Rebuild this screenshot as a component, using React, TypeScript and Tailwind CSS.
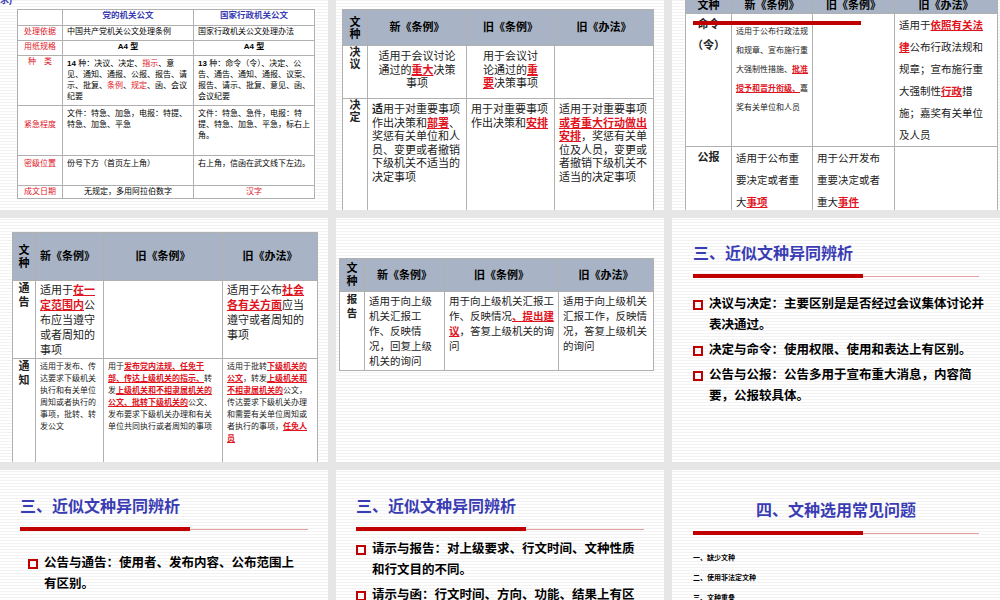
import React from "react";

const slideBg =
	"relative overflow-hidden bg-[repeating-linear-gradient(0deg,#ffffff_0px,#ffffff_2px,#f2f2f2_2px,#f2f2f2_3px)]";

function R({ children }: { children: React.ReactNode }) {
	return <span className="text-[#e0141e] font-bold underline">{children}</span>;
}

function Title({ text, center }: { text: string; center?: boolean }) {
	return (
		<div>
			<div className={`text-[16px] font-bold text-[#3a3cb4] ${center ? "text-center" : ""}`}>{text}</div>
			<div className="mt-2 flex items-center">
				<div className="h-[4px] w-[170px] bg-[#c00000]" />
				<div className="h-px flex-1 bg-[#e6a0a0]" />
			</div>
		</div>
	);
}

function Bullet({ children }: { children: React.ReactNode }) {
	return (
		<div className="flex gap-1.5 text-[12.5px] font-bold leading-[21px] text-black">
			<span className="mt-[6px] h-[10px] w-[10px] shrink-0 border-2 border-[#c00000]" />
			<span>{children}</span>
		</div>
	);
}

const th = "border border-[#b0b0b0] bg-[#a8b4c5] font-bold text-black";
const td = "border border-[#b0b0b0] align-top";

export default function App() {
	return (
		<div
			className="grid h-[600px] w-[1000px] grid-cols-3 grid-rows-[210px_244px_1fr] gap-2 overflow-hidden bg-[#e6e6e6]"
			style={{ fontFamily: '"Liberation Sans", "Noto Sans CJK SC", sans-serif' }}
		>
			{/* slide 1 */}
			<div className={`${slideBg} px-[17px] pt-[9px]`}>
				<div className="absolute left-0 top-[-6px] text-[9px] font-bold text-[#3a3cb4]">求)</div>
				<table className="w-[298px] border-collapse border border-[#888] bg-white text-[8px] leading-[11px]">
					<colgroup>
						<col className="w-[45px]" />
						<col className="w-[131px]" />
						<col />
					</colgroup>
					<tbody>
						<tr className="h-[16px] text-center text-[#3a3cb4] font-bold text-[8.5px]">
							<td className={td} />
							<td className={`${td} align-middle`}>党的机关公文</td>
							<td className={`${td} align-middle`}>国家行政机关公文</td>
						</tr>
						<tr className="h-[15px]">
							<td className={`${td} text-[#e0141e] text-center align-middle`}>处理依据</td>
							<td className={`${td} px-1 align-middle`}>中国共产党机关公文处理条例</td>
							<td className={`${td} px-1 align-middle`}>国家行政机关公文处理办法</td>
						</tr>
						<tr className="h-[15px]">
							<td className={`${td} text-[#e0141e] text-center align-middle`}>用纸规格</td>
							<td className={`${td} text-center font-bold align-middle`}>A4 型</td>
							<td className={`${td} text-center font-bold align-middle`}>A4 型</td>
						</tr>
						<tr className="h-[50px]">
							<td className={`${td} text-[#e0141e] text-center align-middle`}>种　类</td>
							<td className={`${td} px-1 pt-0.5`}>
								<b>14</b> 种：决议、决定、<span className="text-[#e0141e]">指示</span>、意见、通知、通报、公报、报告、请示、批复、
								<span className="text-[#e0141e]">条例</span>、<span className="text-[#e0141e]">规定</span>、函、会议纪要
							</td>
							<td className={`${td} px-1 pt-0.5`}>
								<b>13</b> 种：命令（令）、决定、公告、通告、通知、通报、议案、报告、请示、批复、意见、函、会议纪要
							</td>
						</tr>
						<tr className="h-[50px]">
							<td className={`${td} text-[#e0141e] text-center pt-[13px]`}>紧急程度</td>
							<td className={`${td} px-1 pt-0.5`}>文件：特急、加急，电报：特提、特急、加急、平急</td>
							<td className={`${td} px-1 pt-0.5`}>文件：特急、急件，电报：特提、特急、加急、平急，标右上角。</td>
						</tr>
						<tr className="h-[30px]">
							<td className={`${td} text-[#e0141e] text-center pt-0.5`}>密级位置</td>
							<td className={`${td} px-1 pt-0.5`}>份号下方（首页左上角）</td>
							<td className={`${td} px-1 pt-0.5`}>右上角，信函在武文线下左边。</td>
						</tr>
						<tr className="h-[13px]">
							<td className={`${td} text-[#e0141e] text-center`}>成文日期</td>
							<td className={`${td} text-center`}>无规定，多用阿拉伯数字</td>
							<td className={`${td} text-center text-[#e0141e]`}>汉字</td>
						</tr>
					</tbody>
				</table>
			</div>

			{/* slide 2 */}
			<div className={`${slideBg} pl-[6px] pt-[9px]`}>
				<table className="w-[312px] border-collapse bg-white text-[11px] leading-[13.5px] text-[#222]">
					<colgroup>
						<col className="w-[25px]" />
						<col className="w-[99px]" />
						<col className="w-[88px]" />
						<col />
					</colgroup>
					<tbody>
						<tr className="h-[36px] text-[11px]">
							<td className={`${th} text-center leading-[12px]`}>文<br />种</td>
							<td className={`${th} text-center`}>新《条例》</td>
							<td className={`${th} text-center`}>旧《条例》</td>
							<td className={`${th} text-center`}>旧《办法》</td>
						</tr>
						<tr className="h-[53px]">
							<td className={`${td} text-center align-middle font-bold leading-[12px]`}>决<br />议</td>
							<td className={`${td} text-center pt-1 px-2`}>适用于会议讨论通过的<R>重大</R>决策事项</td>
							<td className={`${td} text-center pt-1 px-3`}>用于会议讨论通过的<R>重要</R>决策事项</td>
							<td className={td} />
						</tr>
						<tr className="h-[112px]">
							<td className={`${td} text-center align-middle font-bold leading-[12px]`}>决<br />定</td>
							<td className={`${td} px-1 pt-1`}><b>适</b>用于对重要事项作出决策和<R>部署</R>、奖惩有关单位和人员、变更或者撤销下级机关不适当的决定事项</td>
							<td className={`${td} px-1 pt-1`}>用于对重要事项作出决策和<R>安排</R></td>
							<td className={`${td} px-1 pt-1`}>适用于对重要事项<R>或者重大行动做出安排</R>，奖惩有关单位及人员，变更或者撤销下级机关不适当的决定事项</td>
						</tr>
					</tbody>
				</table>
			</div>

			{/* slide 3 */}
			<div className={`${slideBg} pl-[13px]`}>
				<table className="mt-[-4px] w-[313px] border-collapse bg-white text-[9px] leading-[21px] text-[#222]">
					<colgroup>
						<col className="w-[46px]" />
						<col className="w-[81px]" />
						<col className="w-[82px]" />
						<col />
					</colgroup>
					<tbody>
						<tr className="h-[17px] text-[11px] leading-[12px]">
							<td className={`${th} text-center`}>文种</td>
							<td className={`${th} text-center`}>新《条例》</td>
							<td className={`${th} text-center`}>旧《条例》</td>
							<td className={`${th} text-center`}>旧《办法》</td>
						</tr>
						<tr>
							<td className={`${td} text-center align-middle font-bold text-[11px]`}>命令<br />（令）</td>
							<td className={`${td} px-1 pt-2 leading-[19px] text-[8px]`}>适用于公布行政法规和规章、宣布施行重大强制性措施、<R>批准授予和晋升衔级、</R>嘉奖有关单位和人员</td>
							<td className={td} />
							<td className={`${td} px-1 text-[10.5px] leading-[22px]`}>适用于<R>依照有关法律</R>公布行政法规和规章；宣布施行重大强制性<R>行政</R>措施；嘉奖有关单位及人员</td>
						</tr>
						<tr>
							<td className={`${td} text-center align-middle font-bold text-[11px]`}>公报</td>
							<td className={`${td} px-1 text-[10.5px] leading-[22px]`}>适用于公布重要决定或者重大<R>事项</R></td>
							<td className={`${td} px-1 text-[10.5px] leading-[22px]`}>用于公开发布重要决定或者重大<R>事件</R></td>
							<td className={td} />
						</tr>
					</tbody>
				</table>
				<div className="absolute left-[21px] top-[21px] h-[4px] w-[168px] bg-[#c00000]" />
			</div>

			{/* row 2 slide 1 */}
			<div className={`${slideBg} pl-[12px] pt-[14px]`}>
				<table className="w-[306px] border-collapse bg-white text-[11px] leading-[15px] text-[#222]">
					<colgroup>
						<col className="w-[23px]" />
						<col className="w-[68px]" />
						<col className="w-[119px]" />
						<col />
					</colgroup>
					<tbody>
						<tr className="h-[48px] text-[11px]">
							<td className={`${th} text-center leading-[13px]`}>文<br />种</td>
							<td className={`${th} px-1`}>新《条例》</td>
							<td className={`${th} text-center`}>旧《条例》</td>
							<td className={`${th} text-center`}>旧《办法》</td>
						</tr>
						<tr className="h-[72px]">
							<td className={`${td} text-center align-middle font-bold leading-[14px]`}>通<br />告</td>
							<td className={`${td} px-1 pt-0.5`}>适用于<R>在一定范围内</R>公布应当遵守或者周知的事项</td>
							<td className={td} />
							<td className={`${td} px-1 pt-0.5`}>适用于公布<R>社会各有关方面</R>应当遵守或者周知的事项</td>
						</tr>
						<tr className="h-[108px] text-[8px] leading-[12px]">
							<td className={`${td} text-center align-middle font-bold text-[11px] leading-[14px]`}>通<br />知</td>
							<td className={`${td} px-1 pt-0.5`}>适用于发布、传达要求下级机关执行和有关单位周知或者执行的事项，批转、转发公文</td>
							<td className={`${td} px-1 pt-0.5`}>用于<R>发布党内法规、任免干部、传达上级机关的指示、</R>转发<R>上级机关和不相隶属机关的公文、批转下级机关的</R>公文、发布要求下级机关办理和有关单位共同执行或者周知的事项</td>
							<td className={`${td} px-1 pt-0.5`}>适用于批转<R>下级机关的公文</R>，转发<R>上级机关和不相隶属机关的</R>公文，传达要求下级机关办理和需要有关单位周知或者执行的事项，<R>任免人员</R></td>
						</tr>
					</tbody>
				</table>
			</div>

			{/* row 2 slide 2 */}
			<div className={`${slideBg} pl-[3px] pt-[40px]`}>
				<table className="w-[315px] border-collapse bg-white text-[10.5px] leading-[15px] text-[#222]">
					<colgroup>
						<col className="w-[25px]" />
						<col className="w-[80px]" />
						<col className="w-[114px]" />
						<col />
					</colgroup>
					<tbody>
						<tr className="h-[33px] text-[11px]">
							<td className={`${th} text-center leading-[13px]`}>文<br />种</td>
							<td className={`${th} text-center`}>新《条例》</td>
							<td className={`${th} text-center`}>旧《条例》</td>
							<td className={`${th} text-center`}>旧《办法》</td>
						</tr>
						<tr className="h-[79px]">
							<td className={`${td} text-center align-middle font-bold leading-[14px]`}>报<br />告</td>
							<td className={`${td} px-1 pt-0.5`}>适用于向上级机关汇报工作、反映情况，回复上级机关的询问</td>
							<td className={`${td} px-1 pt-0.5`}>用于向上级机关汇报工作、反映情况<R>、提出建议</R>，答复上级机关的询问</td>
							<td className={`${td} px-1 pt-0.5`}>适用于向上级机关汇报工作，反映情况，答复上级机关的询问</td>
						</tr>
					</tbody>
				</table>
			</div>

			{/* row 2 slide 3 */}
			<div className={`${slideBg} flex flex-col gap-2 pl-[21px] pr-[6px] pt-[24px]`}>
				<div className="pr-[15px]">
					<Title text="三、近似文种异同辨析" />
				</div>
				<div className="mt-2 flex flex-col gap-1">
					<Bullet>决议与决定：主要区别是是否经过会议集体讨论并表决通过。</Bullet>
					<Bullet>决定与命令：使用权限、使用和表达上有区别。</Bullet>
					<Bullet>公告与公报：公告多用于宣布重大消息，内容简要，公报较具体。</Bullet>
				</div>
			</div>

			{/* row 3 slide 1 */}
			<div className={`${slideBg} px-[20px] pt-[25px]`}>
				<Title text="三、近似文种异同辨析" />
				<div className="mt-[22px] flex flex-col gap-1 pl-[8px] pr-2">
					<Bullet>公告与通告：使用者、发布内容、公布范围上有区别。</Bullet>
					<Bullet>通知与通告：主要是适用对象有区别。</Bullet>
				</div>
			</div>

			{/* row 3 slide 2 */}
			<div className={`${slideBg} px-[20px] pt-[25px]`}>
				<Title text="三、近似文种异同辨析" />
				<div className="mt-[8px] flex flex-col gap-1 pr-1">
					<Bullet>请示与报告：对上级要求、行文时间、文种性质和行文目的不同。</Bullet>
					<Bullet>请示与函：行文时间、方向、功能、结果上有区别。</Bullet>
				</div>
			</div>

			{/* row 3 slide 3 */}
			<div className={`${slideBg} px-[21px] pt-[29px]`}>
				<Title text="四、文种选用常见问题" center />
				<div className="mt-[18px] flex flex-col gap-[11px] text-[7px] font-bold leading-[9px] text-black">
					<div>一、缺少文种</div>
					<div>二、使用非法定文种</div>
					<div>三、文种重叠</div>
				</div>
			</div>
		</div>
	);
}
